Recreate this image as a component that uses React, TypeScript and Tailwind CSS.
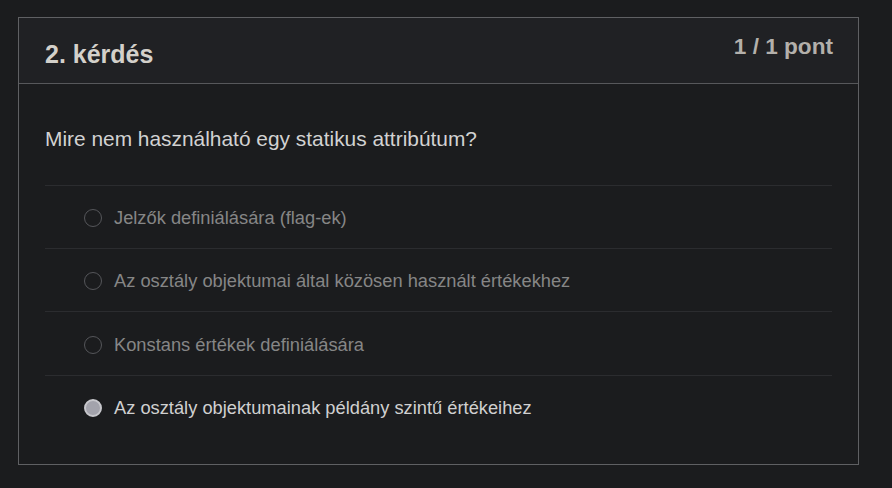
const options = [
  { id: 'a', label: 'Jelzők definiálására (flag-ek)', checked: false },
  { id: 'b', label: 'Az osztály objektumai által közösen használt értékekhez', checked: false },
  { id: 'c', label: 'Konstans értékek definiálására', checked: false },
  { id: 'd', label: 'Az osztály objektumainak példány szintű értékeihez', checked: true },
]

export default function App() {
  return (
    <div
      className="min-h-screen w-full bg-[#1b1c1e] pt-[17px] pl-[18px]"
      style={{ fontFamily: '"Liberation Sans", Arial, sans-serif' }}
    >
      <div className="w-[841px] h-[448px] border border-[#5f6063] flex flex-col">
        {/* fejléc */}
        <div className="h-[66px] bg-[#202124] border-b border-[#57585b] flex items-start justify-between pl-[26px] pr-[25px] pt-[16px]">
          <h3 className="mt-[5px] text-[25px] leading-[30px] font-bold text-[#d3d0ca]">2. kérdés</h3>
          <div className="text-[22.6px] leading-[26px] font-bold text-[#b3b0ab]">1 / 1 pont</div>
        </div>

        {/* kérdés */}
        <div className="px-[26px] pt-[43px]">
          <p className="text-[20.9px] leading-[24px] text-[#d2d2d2]">
            Mire nem használható egy statikus attribútum?
          </p>
          <div className="mt-[34px]">
            {options.map((opt, i) => (
              <label
                key={opt.id}
                className={
                  i === 2
                    ? 'h-[64px] pt-[2px] border-t border-[#2b2c2f] flex items-center'
                    : 'h-[63px] pt-[2px] border-t border-[#2b2c2f] flex items-center'
                }
              >
                <span
                  className={
                    opt.checked
                      ? 'ml-[39px] w-[18px] h-[18px] rounded-full bg-[#a3a3ac] border-2 border-[#c7c7cc] shrink-0'
                      : 'ml-[39px] w-[18px] h-[18px] rounded-full border-[1.5px] border-[#55565a] shrink-0'
                  }
                />
                <span
                  className={
                    opt.checked
                      ? 'ml-[12px] text-[18.3px] leading-[22px] text-[#d0d0d0]'
                      : 'ml-[12px] text-[18.3px] leading-[22px] text-[#868686]'
                  }
                >
                  {opt.label}
                </span>
              </label>
            ))}
          </div>
        </div>
      </div>
    </div>
  )
}
